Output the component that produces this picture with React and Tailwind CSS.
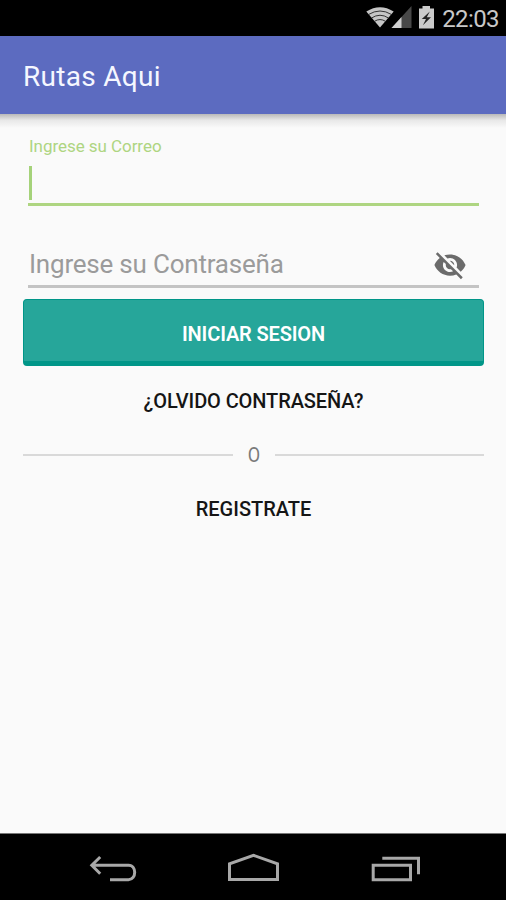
function StatusBar() {
  return (
    <header className="flex h-[36px] shrink-0 items-center justify-end bg-black pr-[7px] text-[#c8c8c8]">
      <svg width="70" height="36" viewBox="366 0 70 36" className="mr-[6px]">
        <path d="M366.3 11.5Q380 3 393.7 11.5L380 27.5Z" fill="#c6c6c6" />
        <g fill="none" stroke="#222" strokeWidth="0.9">
          <path d="M368.5 14.5Q380 7.5 391.5 14.5" />
          <path d="M371.5 18Q380 12.5 388.5 18" />
          <path d="M374.5 21.3Q380 17.8 385.5 21.3" />
        </g>
        <path d="M411.5 6V28H391.5Z" fill="#484848" />
        <path d="M401.5 17V28H391.5Z" fill="#d0d0d0" />
        <path d="M422.5 6H430V8.5H434V28.5H419V8.5H422.5Z" fill="#cbcbcb" />
        <path d="M429.8 11.5L421.8 19H426L422.9 25.2L431 17.3H426.8Z" fill="#222" />
      </svg>
      <span className="pt-[2px] text-[24px] leading-[34px] tracking-[-0.6px]">22:03</span>
    </header>
  );
}

function Navigation() {
  return (
    <nav className="flex h-[67px] shrink-0 items-center border-t border-[#777] bg-black">
      <svg width="506" height="66" viewBox="0 834 506 66" fill="none" stroke="#a8a8a8" strokeWidth="3">
        <path d="M92 865.2H128.5C133 865.2 134.7 869 134.7 872.3C134.7 876 132.5 879.8 128.5 879.8H110M100.2 857L91.8 865.2L100.2 873.7" />
        <path d="M229.5 879.5V863.8L253.5 855.3L277.5 863.8V879.5Z" />
        <path d="M373.2 865.2H410.5V879.7H373.2ZM382.3 858.3H418.5V874.2" />
      </svg>
    </nav>
  );
}

export default function App() {
  return (
    <div className="flex h-[900px] w-[506px] flex-col overflow-hidden bg-[#fafafa] font-['Roboto',sans-serif]">
      <StatusBar />
      <div className="flex h-[78px] shrink-0 items-center bg-[#5c6bc0] pl-[23px] pt-[3px]">
        <h1 className="text-[28px] leading-[32px] tracking-[0.3px] text-[#f5f7ff]">Rutas Aqui</h1>
      </div>
      <div className="h-[14px] shrink-0 bg-linear-to-b from-[#b9b9b9] via-[#e8e8e8] via-45% to-[#fafafa]" />
      <main className="flex flex-1 flex-col pr-[22px] pl-[23px]">
        <section className="mx-[5px] flex h-[78px] flex-col border-b-[3px] border-[#aed581]">
          <label className="mt-[8px] pl-[1px] text-[17px] leading-[20px] tracking-[-0.05px] text-[#aed581]">Ingrese su Correo</label>
          <div className="mt-[10px] ml-[1px] h-[34px] w-[3px] bg-[#a5d27a]" />
        </section>
        <section className="mx-[5px] mt-[40px] flex h-[42px] items-center justify-between border-b-[3px] border-[#c4c4c4] pr-[12px]">
          <span className="-mt-[4px] pl-[1px] text-[26px] leading-[36px] tracking-[-0.21px] text-[#9b9b9b]">Ingrese su Contraseña</span>
          <svg className="-mt-[2px]" width="34" height="34" viewBox="0 0 24 24" fill="#6b6b6b">
            <path d="M12 7c2.76 0 5 2.24 5 5 0 .65-.13 1.26-.36 1.83l2.92 2.92c1.51-1.26 2.7-2.89 3.43-4.75-1.73-4.39-6-7.5-11-7.5-1.4 0-2.74.25-3.98.7l2.16 2.16C10.74 7.13 11.35 7 12 7zM2 4.27l2.28 2.28.46.46C3.08 8.3 1.78 10.02 1 12c1.73 4.39 6 7.5 11 7.5 1.55 0 3.03-.3 4.38-.84l.42.42L19.73 22 21 20.73 3.27 3 2 4.27zM7.53 9.8l1.55 1.55c-.05.21-.08.43-.08.65 0 1.66 1.34 3 3 3 .22 0 .44-.03.65-.08l1.55 1.55c-.67.33-1.41.53-2.2.53-2.76 0-5-2.24-5-5 0-.79.2-1.53.53-2.2zm4.31-.78l3.15 3.15.02-.16c0-1.66-1.34-3-3-3l-.17.01z" />
          </svg>
        </section>
        <button className="mt-[11px] h-[67px] rounded-[4px] border border-b-[5px] border-[#009688] bg-[#26a69a] pt-[6px] text-[20px] font-semibold tracking-[-0.15px] text-white">INICIAR SESION</button>
        <button className="mt-[20px] h-[30px] text-[20px] font-medium leading-[30px] tracking-[-0.1px] text-[#151515]">¿OLVIDO CONTRASEÑA?</button>
        <div className="mt-[24px] flex h-[30px] items-center">
          <div className="h-[2px] flex-1 bg-[#d9d9d9]" />
          <span className="w-[42px] scale-x-90 pt-[1px] text-center text-[20px] leading-[29px] text-[#7a7a7a]">O</span>
          <div className="h-[2px] flex-1 bg-[#d9d9d9]" />
        </div>
        <button className="mt-[24px] h-[30px] text-[20px] font-medium leading-[30px] text-[#151515]">REGISTRATE</button>
      </main>
      <Navigation />
    </div>
  );
}
